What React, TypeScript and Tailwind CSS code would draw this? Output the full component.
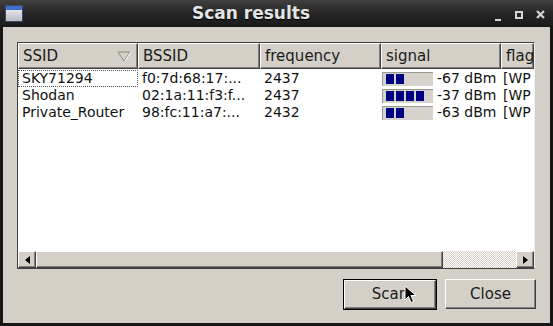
import React from "react";

type Net = { ssid: string; bssid: string; freq: string; bars: number; dbm: string };

const nets: Net[] = [
  { ssid: "SKY71294", bssid: "f0:7d:68:17:...", freq: "2437", bars: 2, dbm: "-67 dBm" },
  { ssid: "Shodan", bssid: "02:1a:11:f3:f...", freq: "2437", bars: 4, dbm: "-37 dBm" },
  { ssid: "Private_Router", bssid: "98:fc:11:a7:...", freq: "2432", bars: 2, dbm: "-63 dBm" },
];

// raised bevel used by header cells, scrollbar parts and push buttons
const raised =
  "bg-[#d4d0c8] border-t border-l border-t-white border-l-white border-r border-b border-r-[#404040] border-b-[#404040] shadow-[inset_-1px_-1px_0_#808080]";

function SignalBar({ bars }: { bars: number }) {
  return (
    <div className="h-[14px] w-[51px] shrink-0 bg-[#d6d3ce] border-t border-l border-[#9a9893] flex items-center gap-[2px] pl-[3px]">
      {Array.from({ length: bars }).map((_, i) => (
        <div key={i} className="h-[10px] w-[8px] bg-[#000080]" />
      ))}
    </div>
  );
}

function Cursor() {
  return (
    <svg className="absolute left-[404px] top-[285px]" width="14" height="20" viewBox="0 0 14 20">
      <path d="M1 1 L1 15 L4.5 11.5 L7 17.5 L9.5 16.5 L7 10.5 L12 10.5 Z" fill="#000" stroke="#fff" strokeWidth="1" strokeLinejoin="round" />
    </svg>
  );
}

export default function App() {
  const cols = ["w-[120px]", "w-[122px]", "w-[121px]", "w-[120px]"];

  return (
    <div className="relative w-[553px] h-[326px] flex flex-col bg-[#161616] font-['DejaVu_Sans',sans-serif] overflow-hidden">
      {/* title bar */}
      <div className="h-[27px] shrink-0 flex items-center bg-gradient-to-b from-[#404040] via-[#262626] to-[#1a1a1a] px-[5px]">
        <div className="w-[18px] h-[17px] border border-[#3a4a6a] bg-gradient-to-b from-[#f4f4f4] to-[#b8bcc4] flex flex-col">
          <div className="h-[4px] bg-[#3f6fc8]" />
        </div>
        <div className="flex-1 text-center text-[17px] font-bold text-[#e4e4e4] [text-shadow:0_1px_1px_#000] leading-none">
          Scan results
        </div>
        <div className="w-[69px] flex items-center justify-end gap-[13px] pr-[3px] text-[#d6d6d6]">
          <svg width="8" height="16" viewBox="0 0 8 16">
            <rect x="1" y="13" width="6" height="2" fill="currentColor" />
          </svg>
          <svg width="8" height="16" viewBox="0 0 8 16">
            <rect x="1" y="6" width="6" height="6" fill="none" stroke="currentColor" strokeWidth="2" />
          </svg>
          <svg width="9" height="16" viewBox="0 0 9 16">
            <path d="M1 5 L8 12 M8 5 L1 12" stroke="currentColor" strokeWidth="2.2" />
          </svg>
        </div>
      </div>

      {/* dialog body */}
      <div className="flex-1 mx-[3px] mb-[3px] bg-[#d4d0c8] flex flex-col pl-[14px] pr-[15px] pt-[15px]">
        {/* list view */}
        <div className="h-[227px] flex flex-col border border-t-[#404040] border-l-[#404040] border-b-[#404040] border-r-[#f0f0f0] bg-white overflow-hidden">
          {/* header */}
          <div className="h-[26px] shrink-0 flex bg-[#d4d0c8] overflow-hidden text-[15px] text-[#1a1a1a]">
            {["SSID", "BSSID", "frequency", "signal"].map((h, i) => (
              <div key={h} className={`${cols[i]} shrink-0 ${raised} flex items-center pl-[4px] pr-[6px]`}>
                <span className="flex-1">{h}</span>
                {i === 0 && (
                  <svg width="14" height="11" viewBox="0 0 14 11">
                    <path d="M1 1 L13 1 L7 10 Z" fill="none" stroke="#8a8883" strokeWidth="1" />
                    <path d="M13 1 L7 10" stroke="#ffffff" strokeWidth="1" transform="translate(1 0)" />
                  </svg>
                )}
              </div>
            ))}
            <div className={`flex-1 min-w-0 ${raised} flex items-center pl-[4px] overflow-hidden whitespace-nowrap`}>flag</div>
          </div>

          {/* rows */}
          <div className="flex-1 pt-[1px] text-[14px] leading-[17px] text-[#111] overflow-hidden">
            {nets.map((n, r) => (
              <div key={n.ssid} className="h-[17px] flex whitespace-nowrap">
                <div className={`${cols[0]} shrink-0 pl-[3px] ${r === 0 ? "border border-dotted border-[#555]" : "border border-transparent"}`}>
                  <span className="relative -top-[1px]">{n.ssid}</span>
                </div>
                <div className={`${cols[1]} shrink-0 pl-[4px] overflow-hidden`}>{n.bssid}</div>
                <div className={`${cols[2]} shrink-0 pl-[4px]`}>{n.freq}</div>
                <div className={`${cols[3]} shrink-0 pl-[1px] flex items-center gap-[4px]`}>
                  <SignalBar bars={n.bars} />
                  <span>{n.dbm}</span>
                </div>
                <div className="flex-1 min-w-0 pl-[2px] overflow-hidden">[WP</div>
              </div>
            ))}
          </div>

          {/* horizontal scrollbar */}
          <div className="h-[17px] shrink-0 flex bg-[#d4d0c8]">
            <div className={`w-[18px] ${raised} flex items-center justify-center`}>
              <svg width="5" height="8" viewBox="0 0 5 8"><path d="M5 0 L0 4 L5 8 Z" fill="#000" /></svg>
            </div>
            <div className={`w-[407px] ${raised}`} />
            <div className="flex-1 bg-[repeating-conic-gradient(#d4d0c8_0_25%,#ffffff_0_50%)] bg-[length:2px_2px]" />
            <div className={`w-[18px] ${raised} flex items-center justify-center`}>
              <svg width="5" height="8" viewBox="0 0 5 8"><path d="M0 0 L5 4 L0 8 Z" fill="#000" /></svg>
            </div>
          </div>
        </div>

        {/* buttons */}
        <div className="flex justify-end items-start gap-[8px] mt-[10px] -mr-[1px] text-[15px] text-[#1a1a1a]">
          <div className="border border-black">
            <div className={`w-[92px] h-[29px] ${raised} flex items-center justify-center`}>Scan</div>
          </div>
          <div className={`w-[91px] h-[30px] ${raised} flex items-center justify-center`}>Close</div>
        </div>
      </div>

      <Cursor />
    </div>
  );
}
